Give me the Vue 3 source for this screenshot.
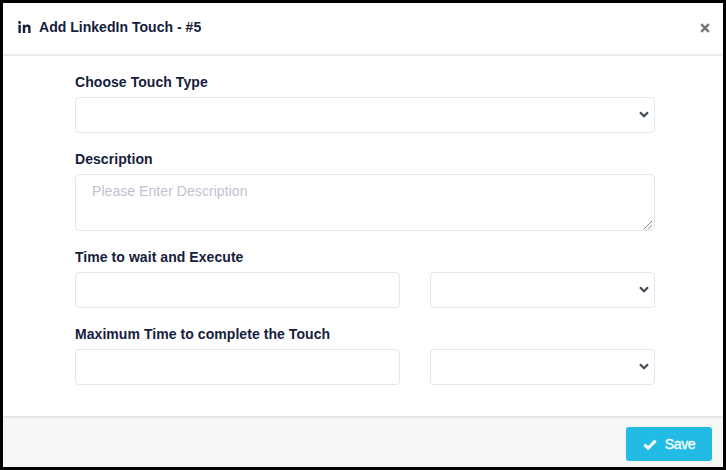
<script setup>
import { ref } from 'vue'

const touchNumber = ref(5)
const touchType = ref('')
const description = ref('')

const timings = ref([
  { id: 'wait', label: 'Time to wait and Execute', value: '', unit: '' },
  { id: 'max', label: 'Maximum Time to complete the Touch', value: '', unit: '' }
])
</script>

<template>
  <div class="modal">
    <header class="modal-header">
      <svg class="icon-in" viewBox="0 0 13 12" width="13" height="12">
        <circle cx="1.6" cy="1.5" r="1.4" />
        <rect x="0.4" y="3.8" width="2.4" height="8.2" />
        <path d="M4.8 3.8h2.3v1.1c.5-.8 1.4-1.3 2.5-1.3 2.3 0 3 1.4 3 3.6V12h-2.4V7.9c0-1.2-.2-2.1-1.4-2.1s-1.6.9-1.6 2V12H4.8z" />
      </svg>
      <h5 class="title">Add LinkedIn Touch - #{{ touchNumber }}</h5>
      <button class="close" type="button" aria-label="Close">
        <svg viewBox="0 0 10 10" width="10" height="10">
          <path d="M1.2 1.2l7.6 7.6M8.8 1.2L1.2 8.8" />
        </svg>
      </button>
    </header>

    <main class="modal-body">
      <div class="group">
        <label for="type">Choose Touch Type</label>
        <div class="control">
          <select id="type" v-model="touchType"></select>
          <svg class="chevron" viewBox="0 0 10 7" width="10" height="7">
            <path d="M1 1.2l4 4 4-4" />
          </svg>
        </div>
      </div>

      <div class="group">
        <label for="description">Description</label>
        <div class="control">
          <textarea id="description" v-model="description" placeholder="Please Enter Description"></textarea>
          <svg class="grip" viewBox="0 0 10 10" width="10" height="10">
            <path d="M.8 9.2l8.4-8.4M5 9.2l4.2-4.2" />
          </svg>
        </div>
      </div>

      <div v-for="item in timings" :key="item.id" class="group">
        <label :for="item.id">{{ item.label }}</label>
        <div class="row">
          <div class="control">
            <input :id="item.id" v-model="item.value" type="text" />
          </div>
          <div class="control">
            <select v-model="item.unit"></select>
            <svg class="chevron" viewBox="0 0 10 7" width="10" height="7">
              <path d="M1 1.2l4 4 4-4" />
            </svg>
          </div>
        </div>
      </div>
    </main>

    <footer class="modal-footer">
      <button class="save" type="button">
        <svg viewBox="0 0 14 11" width="14" height="11">
          <path d="M1.4 5.6l3.7 3.6 7.5-7.6" />
        </svg>
        <span>Save</span>
      </button>
    </footer>
  </div>
</template>

<style>
body {
  background: #fff;
}
</style>

<style scoped>
.modal {
  box-sizing: border-box;
  display: flex;
  flex-direction: column;
  width: 726px;
  height: 470px;
  border: 3px solid #000;
  background: #fff;
  color: #15203c;
  font-family: "Liberation Sans", Arial, sans-serif;
  font-size: 14px;
}

.modal-header {
  box-sizing: border-box;
  display: flex;
  align-items: center;
  height: 53px;
  padding: 0 13px 3px 15px;
  border-bottom: 2px solid #ebebeb;
}

.icon-in {
  margin-right: 8px;
  margin-bottom: 1px;
  fill: #15203c;
}

.title {
  margin: 0 0 1px;
  font-size: 14px;
  font-weight: bold;
  line-height: 20px;
  letter-spacing: 0.03px;
}

.close {
  display: flex;
  margin-left: auto;
  margin-top: 1px;
  padding: 0;
  border: 0;
  background: none;
}

.close path {
  fill: none;
  stroke: #777;
  stroke-width: 2.5;
}

.modal-body {
  flex: 1;
  display: flex;
  flex-direction: column;
  gap: 16px;
  padding: 16px 68px 0 72px;
}

label {
  display: block;
  margin-bottom: 5px;
  font-weight: bold;
  line-height: 20px;
  letter-spacing: 0.06px;
}

.control {
  position: relative;
}

.row {
  display: grid;
  grid-template-columns: 325px 1fr;
  gap: 30px;
}

input,
select,
textarea {
  display: block;
  box-sizing: border-box;
  width: 100%;
  height: 36px;
  margin: 0;
  padding: 6px 16px;
  border: 1px solid #dfe8eb;
  border-radius: 4px;
  outline: none;
  background: #fff;
  color: #15203c;
  font-family: inherit;
  font-size: 14px;
  line-height: 20px;
  appearance: none;
}

textarea {
  height: 57px;
  letter-spacing: 0.06px;
  resize: none;
}

textarea::placeholder {
  color: #bfbfd2;
}

.chevron {
  position: absolute;
  top: 14px;
  right: 6px;
}

.chevron path {
  fill: none;
  stroke: #434b57;
  stroke-width: 2.2;
}

.grip {
  position: absolute;
  right: 2px;
  bottom: 1px;
}

.grip path {
  fill: none;
  stroke: #858585;
  stroke-width: 1;
}

.modal-footer {
  box-sizing: border-box;
  display: flex;
  justify-content: flex-end;
  align-items: center;
  height: 51px;
  padding: 3px 11px 0 0;
  border-top: 2px solid #e5e5e5;
  background: #f6f6f6;
}

.save {
  display: flex;
  align-items: center;
  justify-content: center;
  gap: 8px;
  width: 86px;
  height: 34px;
  padding: 0;
  border: 0;
  border-radius: 3px;
  background: #22bbe5;
  color: #fff;
  font-family: inherit;
  font-size: 14px;
  letter-spacing: -0.4px;
  -webkit-text-stroke: 0.3px #fff;
}

.save path {
  fill: none;
  stroke: #fff;
  stroke-width: 3;
}
</style>
